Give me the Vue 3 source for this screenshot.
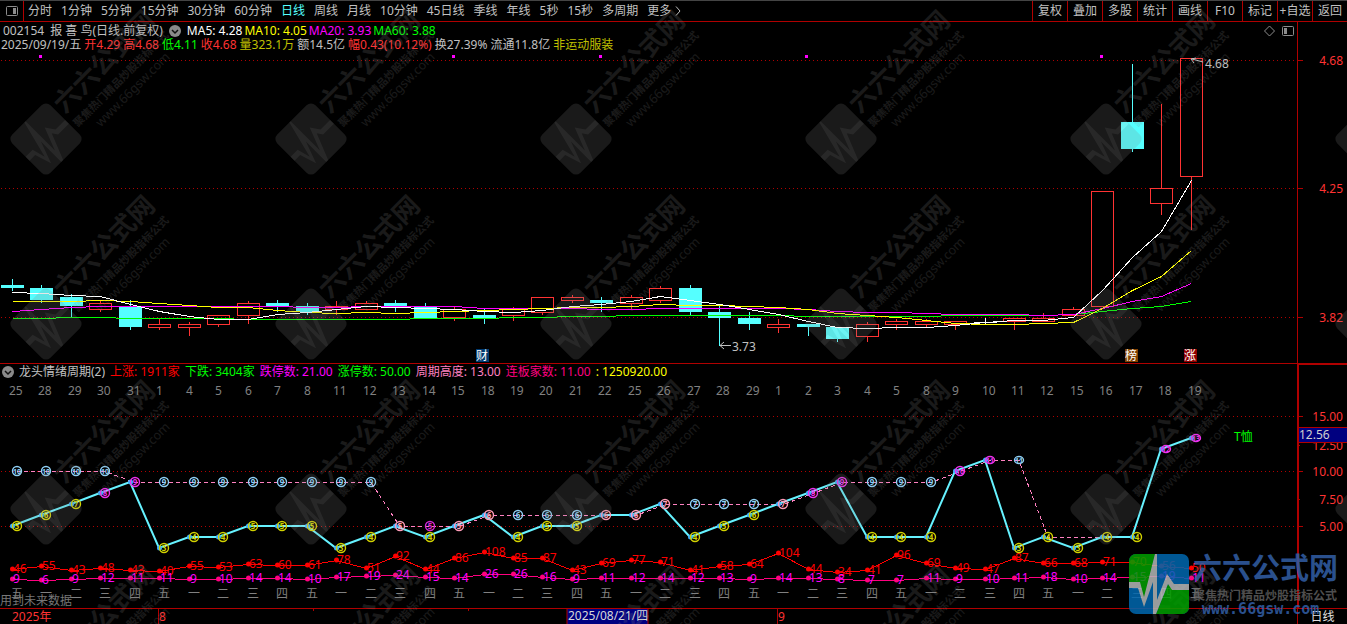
<template>
  <div class="terminal">
    <nav class="toolbar">
      <button class="tool tool-panel" aria-label="面板">
        <svg width="12" height="10" viewBox="0 0 12 10">
          <rect x="0.5" y="0.5" width="11" height="9" rx="1" fill="none" stroke="#8c8c8c" />
          <rect x="7" y="2" width="3" height="6" fill="#8c8c8c" />
        </svg>
      </button>
      <div class="periods">
        <button v-for="p in periods" :key="p" class="tool" :class="{ active: p === current }" @click="current = p">
          {{ p }}
        </button>
        <button class="tool more">
          更多
          <svg width="6" height="10" viewBox="0 0 6 10"><path d="M1 0.5L5 5L1 9.5" fill="none" stroke="#c0c0c0" /></svg>
        </button>
      </div>
      <div class="actions">
        <button v-for="a in actions" :key="a" class="tool action">{{ a }}</button>
      </div>
    </nav>

    <section class="pane price">
      <div class="plot">
        <div class="info">
          <div class="row title-row">
            <span>002154</span>
            <span>报 喜 鸟(日线.前复权)</span>
            <button class="fold" aria-label="折叠">
              <svg width="12" height="12" viewBox="0 0 12 12">
                <circle cx="6" cy="6" r="6" fill="#8a8a8a" />
                <path d="M3 5L6 8L9 5" fill="none" stroke="#111" stroke-width="1.5" />
              </svg>
            </button>
            <div class="row averages">
              <span v-for="m in averages" :key="m.name" :class="m.color">{{ m.name }}: {{ m.value }}</span>
            </div>
            <span class="corner">
              <svg width="30" height="12" viewBox="0 0 30 12">
                <path d="M5.5 1L10.5 6L5.5 11L0.5 6Z" fill="none" stroke="#8c8c8c" />
                <rect x="18.5" y="1.5" width="11" height="9" rx="1" fill="none" stroke="#8c8c8c" />
                <rect x="20" y="3" width="3" height="6" fill="#8c8c8c" />
              </svg>
            </span>
          </div>
          <div class="row quote-row">
            <span v-for="q in quotes" :key="q.text" :class="q.color">{{ q.text }}</span>
          </div>
        </div>
        <svg class="chart" width="100%" height="311">
          <g transform="translate(0 -52)">
            <g shape-rendering="crispEdges">
              <line v-for="t in priceTicks" :key="t.y" x1="1" x2="100%" :y1="t.y + 0.5" :y2="t.y + 0.5" class="grid" />
              <rect v-for="x in marks" :key="x" :x="x" y="55" width="3" height="3" fill="#f0f" />
              <g v-for="(c, i) in candles" :key="i" :stroke="c[0]">
                <line :x1="cx(i) + 0.5" :x2="cx(i) + 0.5" :y1="c[1]" :y2="c[2]" />
                <line :x1="cx(i) + 0.5" :x2="cx(i) + 0.5" :y1="c[3]" :y2="c[4]" />
                <rect
                  :x="cx(i) - 10.5"
                  :y="c[2] + 0.5"
                  width="22"
                  :height="Math.max(c[3] - c[2] - 1, 0.01)"
                  :fill="c[0] === C ? C : 'none'"
                />
              </g>
              <polyline v-for="l in maLines" :key="l.color" :points="l.points" :stroke="l.color" fill="none" />
            </g>
            <path d="M1203 62L1192 59M1196 58L1191 59L1194 63" class="arrow" />
            <text x="1205" y="68">4.68</text>
            <path d="M731 345.5H720M724 342L720 345.5L724 349" class="arrow" />
            <text x="732" y="351">3.73</text>
            <g v-for="b in badges" :key="b.text">
              <rect :x="b.x" y="349" width="13" height="13" :fill="b.fill" />
              <text :x="b.x + 6" y="360" class="badge">{{ b.text }}</text>
            </g>
          </g>
        </svg>
      </div>
      <div class="axis">
        <svg width="100%" height="341">
          <g transform="translate(0 -22)">
            <template v-for="t in priceTicks" :key="t.y">
              <rect x="0" :y="t.y" width="5" height="1" fill="#b00000" />
              <text x="45" :y="t.y + 5" class="tick">{{ t.label }}</text>
            </template>
          </g>
        </svg>
      </div>
    </section>

    <section class="pane mood">
      <div class="plot">
        <div class="row mood-row">
          <button class="fold" aria-label="折叠">
            <svg width="12" height="12" viewBox="0 0 12 12">
              <circle cx="6" cy="6" r="6" fill="#8a8a8a" />
              <path d="M3 5L6 8L9 5" fill="none" stroke="#111" stroke-width="1.5" />
            </svg>
          </button>
          <span v-for="s in stats" :key="s.text" :class="s.color">{{ s.text }}</span>
        </div>
        <svg class="chart" width="100%" height="228">
          <g transform="translate(0 -380)">
            <g shape-rendering="crispEdges">
              <line v-for="y in [416, 471, 526]" :key="y" x1="1" x2="100%" :y1="y + 0.5" :y2="y + 0.5" class="grid" />
            </g>
            <text v-for="(d, i) in dates" :key="i" :x="cx(i) - 3" y="395" class="date">{{ d }}</text>
            <polyline :points="topLine" fill="none" stroke="#ff80c0" stroke-dasharray="4 3" shape-rendering="crispEdges" />
            <g v-for="s in series" :key="s.text">
              <polyline :points="s.points" fill="none" :stroke="s.stroke" shape-rendering="crispEdges" />
              <template v-for="(v, i) in s.values" :key="i">
                <circle :cx="cx(i) + 0.5" :cy="countY(v)" r="2.5" :fill="s.stroke" />
                <text :x="cx(i) + 1" :y="countY(v) + 4" :fill="s.text">{{ v }}</text>
              </template>
            </g>
            <polyline :points="heightLine" fill="none" stroke="#66f2ff" stroke-width="2" />
            <circle v-for="(v, i) in heights" :key="i" :cx="cx(i) + 0.5" :cy="levelY(v)" r="2.5" fill="#40b0ff" />
            <g v-for="(r, i) in rings" :key="i" :stroke="r.color" :fill="r.color">
              <ellipse :cx="r.x" :cy="r.y" :rx="4.5" :ry="r.v > 10 ? 3.5 : 4.5" fill="none" stroke-width="1.4" />
              <text :x="r.x" :y="r.y + 3" class="ring" :class="{ wide: r.v > 9 }">{{ r.v }}</text>
            </g>
            <text v-for="(d, i) in dates" :key="i" :x="cx(i) + 5" y="598" class="weekday">{{ '五一二三四'[i % 5] }}</text>
            <text x="0" y="605" fill="#777">用到未来数据</text>
            <text x="1234" y="441" fill="#0f0">T恤</text>
          </g>
        </svg>
      </div>
      <div class="axis axis-mood">
        <svg width="100%" height="243">
          <g transform="translate(0 -365)">
            <template v-for="t in moodTicks" :key="t.y">
              <rect x="0" :y="t.y" :width="t.minor ? 1 : 4" height="1" fill="#b00000" />
              <text x="44" :y="t.y + 5" class="tick">{{ t.label }}</text>
            </template>
            <rect x="0" y="427" width="100%" height="16" fill="#b00000" />
            <rect x="0" y="428" width="100%" height="14" fill="#000080" />
            <text x="0" y="439" fill="#d0d0d0">12.56</text>
          </g>
        </svg>
      </div>
    </section>

    <footer class="timeline">
      <svg class="chart" width="100%" height="15">
        <rect v-for="x in [158, 777]" :key="x" :x="x" y="0" width="1" height="15" fill="#b00000" />
        <rect v-for="x in [313, 468]" :key="x" :x="x" y="0" width="1" height="2" fill="#b00000" />
        <text x="12" y="12" fill="#f33">2025年</text>
        <text x="159" y="12" fill="#f33">8</text>
        <text x="778" y="12" fill="#f33">9</text>
        <rect x="567" y="-1" width="81" height="17" fill="#000080" stroke="#b00000" />
        <text x="568" y="11" fill="#d8d8d8">2025/08/21/四</text>
      </svg>
      <button class="cycle">日线</button>
    </footer>

    <svg class="overlay" width="100%" height="100%" aria-hidden="true">
      <defs>
        <clipPath id="mark-clip"><rect x="-30" y="-30" width="60" height="60" rx="7" /></clipPath>
        <path
          id="pulse"
          d="M-30 -2H-19L-15 13L-4 -30H-2V16L8 -10L15 0H30V6H13L9 0L-3 30H-6V-2L-15 23L-21 4H-30Z"
        />
      </defs>
      <g v-for="(t, i) in tiles" :key="i" :transform="`translate(${t.x} ${t.y}) rotate(-45) scale(0.9)`" class="tile">
        <rect x="-30" y="-30" width="60" height="60" rx="7" />
        <use href="#pulse" class="tile-pulse" clip-path="url(#mark-clip)" />
        <template v-if="t.words">
          <text x="34" y="-5" class="brand">六六公式网</text>
          <text x="34" y="16" class="slogan">聚焦热门精品炒股指标公式</text>
          <text x="52" y="34" class="site">www.66gsw.com</text>
        </template>
      </g>
      <svg x="100%" y="100%" overflow="visible">
        <g transform="translate(-188 -40)" class="logo">
          <g clip-path="url(#mark-clip)">
            <rect x="-30" y="-30" width="60" height="60" fill="#0068b0" />
            <path d="M-30 -30H-4L-15 18L-20 1H-30ZM-3 30L9 0L14 4H30V30Z" fill="#00a000" />
            <use href="#pulse" fill="#b4b8b8" />
          </g>
          <text x="34" y="-5" class="brand" fill="#325fa6">六六公式网</text>
          <text x="34" y="16" class="slogan" fill="#5c5c5c">聚焦热门精品炒股指标公式</text>
          <text x="43" y="30" class="site-bold" fill="#325fa6">www.66gsw.com</text>
        </g>
      </svg>
    </svg>
  </div>
</template>

<script setup>
import { ref } from 'vue'

const C = '#55ffff'
const R = '#ff3333'
const W = '#ffffff'

const periods = [
  '分时', '1分钟', '5分钟', '15分钟', '30分钟', '60分钟', '日线', '周线', '月线',
  '10分钟', '45日线', '季线', '年线', '5秒', '15秒', '多周期'
]
const current = ref('日线')
const actions = ['复权', '叠加', '多股', '统计', '画线', 'F10', '标记', '+自选', '返回']

const averages = [
  { name: 'MA5', value: '4.28', color: 'white' },
  { name: 'MA10', value: '4.05', color: 'yellow' },
  { name: 'MA20', value: '3.93', color: 'magenta' },
  { name: 'MA60', value: '3.88', color: 'green' }
]
const quotes = [
  { text: '2025/09/19/五', color: '' },
  { text: '开4.29', color: 'up' },
  { text: '高4.68', color: 'up' },
  { text: '低4.11', color: 'green' },
  { text: '收4.68', color: 'up' },
  { text: '量323.1万', color: 'gold' },
  { text: '额14.5亿', color: '' },
  { text: '幅0.43(10.12%)', color: 'up' },
  { text: '换27.39%', color: '' },
  { text: '流通11.8亿', color: '' },
  { text: '非运动服装', color: 'gold' }
]
const stats = [
  { text: '龙头情绪周期(2)', color: '' },
  { text: '上涨: 1911家', color: 'red' },
  { text: '下跌: 3404家', color: 'green' },
  { text: '跌停数: 21.00', color: 'magenta' },
  { text: '涨停数: 50.00', color: 'green' },
  { text: '周期高度: 13.00', color: 'pink' },
  { text: '连板家数: 11.00', color: 'rose' },
  { text: ': 1250920.00', color: 'yellow' }
]

const priceTicks = [
  { y: 60, label: '4.68' },
  { y: 188, label: '4.25' },
  { y: 317, label: '3.82' }
]
const moodTicks = [
  { y: 416, label: '15.00' },
  { y: 445, label: '12.50', minor: true },
  { y: 471, label: '10.00' },
  { y: 499, label: '7.50', minor: true },
  { y: 526, label: '5.00' }
]
const marks = [39, 452, 599, 805, 1100]
const badges = [
  { text: '财', x: 476, fill: '#003a70' },
  { text: '榜', x: 1125, fill: '#804000' },
  { text: '涨', x: 1184, fill: '#900000' }
]

// one trading day per column
const cx = (i) => Math.round(12 + i * 29.47)

// colour, wick top, body top, body bottom, wick bottom
const candles = [
  [C, 279, 285, 288, 291], [C, 285, 288, 300, 303], [C, 294, 297, 306, 317], [R, 300, 303, 310, 312],
  [C, 300, 306, 327, 330], [R, 319, 324, 328, 330], [R, 322, 324, 328, 336], [R, 315, 315, 325, 327],
  [R, 301, 303, 316, 324], [C, 300, 303, 306, 312], [C, 303, 306, 312, 315], [R, 301, 306, 310, 315],
  [R, 301, 303, 310, 310], [C, 300, 303, 306, 312], [C, 303, 306, 318, 318], [R, 307, 309, 318, 321],
  [C, 309, 315, 318, 324], [R, 307, 309, 316, 321], [R, 297, 297, 313, 315], [R, 295, 297, 301, 303],
  [C, 297, 300, 303, 312], [R, 295, 297, 304, 309], [R, 286, 288, 301, 303], [C, 285, 288, 312, 315],
  [C, 306, 312, 318, 346], [C, 312, 318, 324, 330], [R, 319, 324, 328, 333], [C, 324, 324, 327, 336],
  [C, 327, 327, 339, 342], [R, 322, 324, 337, 342], [R, 319, 321, 325, 330], [R, 319, 321, 325, 327],
  [R, 321, 321, 325, 330], [W, 318, 322, 323, 325], [R, 318, 318, 322, 330], [R, 313, 318, 322, 322],
  [R, 307, 309, 316, 316], [R, 191, 191, 307, 307], [C, 64, 122, 149, 152], [R, 104, 188, 204, 215],
  [R, 58, 58, 177, 230]
]

const toPoints = (ys) => ys.map((y, i) => `${cx(i) + 0.5},${y + 0.5}`).join(' ')
const maLines = [
  {
    color: '#00ff00',
    points: toPoints([
      318, 318, 317, 317, 318, 318, 318, 318, 319, 319, 319, 319, 319, 319, 318, 318, 318, 317, 317, 316, 316,
      315, 315, 315, 315, 315, 315, 316, 316, 316, 316, 316, 315, 315, 315, 315, 314, 311, 308, 306, 301
    ])
  },
  {
    color: '#ff00ff',
    points: toPoints([
      311, 309, 307, 306, 306, 306, 306, 306, 306, 306, 307, 307, 306, 306, 306, 306, 308, 308, 308, 308, 309,
      309, 308, 308, 308, 308, 308, 309, 311, 312, 312, 313, 314, 314, 314, 315, 314, 308, 301, 296, 283
    ])
  },
  {
    color: '#ffff00',
    points: toPoints([
      301, 301, 301, 300, 301, 303, 305, 307, 307, 310, 312, 313, 312, 313, 312, 311, 310, 309, 308, 307, 307,
      306, 304, 305, 305, 306, 307, 309, 313, 315, 317, 320, 323, 324, 324, 323, 322, 308, 290, 276, 250
    ])
  },
  {
    color: '#ffffff',
    points: toPoints([
      292, 293, 295, 296, 304, 311, 316, 319, 319, 314, 312, 309, 306, 307, 308, 309, 311, 312, 310, 306, 304,
      301, 296, 300, 304, 309, 314, 321, 327, 328, 327, 327, 325, 322, 320, 320, 317, 290, 257, 231, 180
    ])
  }
]

const dates = [
  25, 28, 29, 30, 31, 1, 4, 5, 6, 7, 8, 11, 12, 13, 14, 15, 18, 19, 20, 21, 22,
  25, 26, 27, 28, 29, 1, 2, 3, 4, 5, 8, 9, 10, 11, 12, 15, 16, 17, 18, 19
]
const heights = [
  5, 6, 7, 8, 9, 3, 4, 4, 5, 5, 5, 3, 4, 5, 4, 5, 6, 4, 5, 5, 6,
  6, 7, 4, 5, 6, 7, 8, 9, 4, 4, 4, 10, 11, 3, 4, 3, 4, 4, 12, 13
]
const tops = [
  10, 10, 10, 10, 9, 9, 9, 9, 9, 9, 9, 9, 9, 5, 5, 5, 6, 6, 6, 6, 6,
  6, 7, 7, 7, 7, 7, 8, 9, 9, 9, 9, 10, 11, 11, 4, 4, 4
]
const levelY = (v) => 581 - v * 11
const countY = (v) => Math.round(581.5 - v * 0.274)

const heightLine = heights.map((v, i) => `${cx(i)},${levelY(v)}`).join(' ')
const topLine = tops.map((v, i) => `${cx(i) + 5},${levelY(v) + 0.5}`).join(' ')

const rings = []
heights.forEach((v, i) => {
  const top = tops[i]
  const x = cx(i) + 5
  if (top > v && i < 35) {
    rings.push({ x, y: levelY(top), v: top, color: i === 14 ? '#d428d4' : '#8fd0f5' })
  }
  let color = '#d2d200'
  if (v >= 8) color = '#f030f0'
  else if (v === top && i < 35) color = '#ff9cb8'
  rings.push({ x, y: levelY(v), v, color })
})

const limitUps = [
  46, 55, 43, 48, 43, 40, 55, 53, 63, 60, 61, 78, 51, 92, 44, 86, 108, 85, 87, 43, 69,
  77, 71, 41, 58, 64, 104, 44, 34, 41, 96, 69, 49, 47, 87, 66, 68, 71, 70, 56, 50
]
const streaks = [
  9, 6, 9, 12, 11, 11, 9, 10, 14, 14, 10, 17, 19, 24, 15, 14, 26, 26, 16, 9, 11,
  12, 14, 12, 13, 9, 14, 13, 8, 7, 7, 11, 9, 10, 11, 18, 10, 14, 15, 19, 11
]
const countPoints = (vs) => vs.map((v, i) => `${cx(i) + 0.5},${countY(v) + 0.5}`).join(' ')
const series = [
  { values: limitUps, points: countPoints(limitUps), stroke: '#ff0000', text: '#ff0000' },
  { values: streaks, points: countPoints(streaks), stroke: '#ff0080', text: '#ff00ff' }
]

const tiles = []
for (let row = 0; row < 4; row++) {
  for (let col = 0; col < 6; col++) {
    tiles.push({ x: 46 + col * 265, y: 139 + row * 185, words: col < 5 })
  }
}
</script>

<style>
body {
  margin: 0;
  background: #000;
}
</style>

<style scoped>
.terminal {
  position: relative;
  display: flex;
  flex-direction: column;
  min-height: 100vh;
  overflow: hidden;
  background: #000;
  color: #c0c0c0;
  font: 12px/14px "Noto Sans", "Noto Sans CJK SC", sans-serif;
  white-space: nowrap;
}
button {
  padding: 0;
  border: 0;
  background: none;
  color: inherit;
  font: inherit;
  cursor: pointer;
}
svg {
  display: block;
}
.toolbar {
  display: flex;
  height: 20px;
  border-top: 1px solid #444;
  border-bottom: 1px solid #b00000;
}
.tool-panel {
  display: flex;
  align-items: center;
  justify-content: center;
  width: 24px;
  border-right: 1px solid #b00000;
}
.periods {
  display: flex;
  flex: 1;
  gap: 9px;
  padding-left: 4px;
}
.active {
  color: #55ffff;
}
.more {
  display: flex;
  align-items: center;
  gap: 4px;
}
.actions {
  display: flex;
}
.action {
  width: 35px;
  border-left: 1px solid #b00000;
}
.pane {
  display: flex;
}
.plot {
  flex: 1;
  min-width: 0;
}
.chart {
  overflow: hidden;
  fill: #c0c0c0;
}
.row {
  display: flex;
  align-items: center;
}
.info {
  padding-top: 2px;
}
.title-row {
  gap: 6px;
  height: 14px;
  padding: 0 3px;
}
.averages {
  gap: 2px;
}
.quote-row {
  gap: 3px;
  height: 14px;
  padding-left: 1px;
}
.mood-row {
  gap: 5px;
  height: 16px;
  padding-left: 2px;
}
.corner {
  margin-left: auto;
}
.axis {
  width: 49px;
  border-left: 1px solid #b00000;
}
.mood {
  flex: 1;
}
.mood .plot {
  border-top: 1px solid #b00000;
  border-bottom: 1px solid #b00000;
}
.axis-mood {
  width: 48px;
  border: solid #b00000;
  border-width: 2px 0 1px 2px;
}
.timeline {
  display: flex;
  height: 15px;
}
.cycle {
  flex: none;
  width: 50px;
  border-left: 1px solid #b00000;
  color: #e0e0e0;
}
.white { color: #fff; }
.yellow { color: #ff0; }
.magenta { color: #f0f; }
.green { color: #0f0; }
.up { color: #f33; }
.red { color: #f00; }
.gold { color: #c0c000; }
.pink { color: #ff80c0; }
.rose { color: #ff0080; }

.grid {
  stroke: #b00000;
  stroke-dasharray: 1 3;
}
.arrow {
  fill: none;
  stroke: #c0c0c0;
}
.tick {
  fill: #f33;
  text-anchor: end;
}
.date,
.weekday {
  fill: #808080;
}
.weekday {
  text-anchor: middle;
}
.badge {
  fill: #fff;
  text-anchor: middle;
}
.ring {
  stroke: none;
  font-size: 8px;
  font-weight: 700;
  text-anchor: middle;
}
.wide {
  font-size: 7px;
}
.overlay {
  position: absolute;
  inset: 0;
  pointer-events: none;
}
.tile {
  fill: #808080;
  opacity: 0.2;
}
.tile-pulse {
  fill: #c8c8c8;
}
.logo {
  opacity: 0.85;
}
.brand,
.slogan {
  font-family: "Noto Sans CJK SC", sans-serif;
  font-weight: 700;
}
.brand {
  font-size: 29px;
}
.slogan {
  font-size: 12px;
}
.site {
  font-size: 14px;
}
.site-bold {
  font: 700 15px "DejaVu Sans Mono", monospace;
}
</style>
